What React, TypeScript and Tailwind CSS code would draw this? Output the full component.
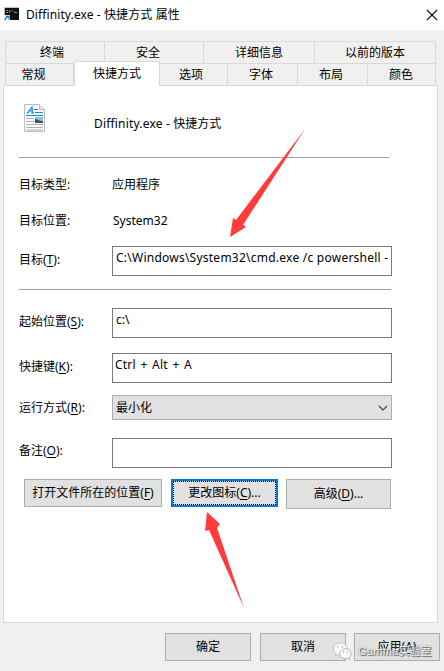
import type { ReactNode } from "react";

function Key({ children }: { children: ReactNode }) {
  return <span className="underline decoration-1 underline-offset-2">{children}</span>;
}

function Tab({ label, className }: { label: string; className: string }) {
  return (
    <div className={`box-border flex h-[22px] shrink-0 items-center justify-center border-r border-t border-[#d9d9d9] ${className}`}>
      {label}
    </div>
  );
}

function Row({ label, className, labelClass = "", children }: { label: ReactNode; className: string; labelClass?: string; children?: ReactNode }) {
  return (
    <div className={`flex ${className}`}>
      <div className={`flex w-[93px] shrink-0 items-center ${labelClass}`}>
        <span>{label}</span>
      </div>
      {children}
    </div>
  );
}

function Field({ children }: { children?: ReactNode }) {
  return (
    <div className="h-[30px] w-[280px] overflow-hidden border border-[#7a7a7a] bg-white pl-[3px] pt-[2px] leading-[18px]">
      {children}
    </div>
  );
}

function Button({ children, className }: { children: ReactNode; className: string }) {
  return (
    <div className={`flex shrink-0 items-center justify-center border border-[#adadad] bg-[#e1e1e1] ${className}`}>
      <span>{children}</span>
    </div>
  );
}

function ConsoleIcon() {
  return (
    <svg width="16" height="16" viewBox="0 0 16 16" className="shrink-0">
      <rect x="0" y="0" width="15" height="13" fill="#b8b8b8" />
      <rect x="1" y="1" width="14" height="12" fill="#101010" />
      <path d="M0 .5H15" stroke="#c4c4c4" />
      <path d="M2 3.500h2M2 5.500h2M5.500 3v3M7 4.500l1-1 1 1M10 5.500h3" stroke="#a8a8a8" strokeWidth="0.800" fill="none" />
      <rect x="0" y="8" width="6" height="6" fill="#eef5fb" />
      <path d="M1 13C1 11 2 10.500 4 9.500M2 9.500h3v3" fill="none" stroke="#1f73b7" strokeWidth="1.300" />
    </svg>
  );
}

function DocumentIcon() {
  return (
    <svg width="22" height="29" viewBox="0 0 22 29" className="shrink-0">
      <path d="M.5 .5H15.500L20.500 5.500V27.500H.5Z" fill="#fbfbfb" stroke="#bdbdbd" />
      <path d="M15.500 .5V5.500H20.500" fill="#e8e8e8" stroke="#bdbdbd" />
      <path d="M2.500 9H5M3.500 9L8 3L8.500 9M5.500 6.800H8M7 9H10" fill="none" stroke="#168bd2" strokeWidth="1.200" />
      <path d="M10 5.500h4M11 8.500h8M2 11.500h17" stroke="#168bd2" />
      <path d="M2 14.500h8M2 17.500h8M2 20.500h17M2 23.500h17M2 26h17" stroke="#b0b0b0" />
      <rect x="11" y="13" width="8" height="6" fill="#8cbfe6" />
      <path d="M11 15c3 0 3 2 8 2v2h-8Z" fill="#35546b" />
    </svg>
  );
}

function Watermark() {
  return (
    <div className="absolute left-[333px] top-[642px] flex items-start">
      <svg width="19" height="19" viewBox="0 0 19 19">
        <path d="M7.500 1C3.500 1 .7 3.500 .7 6.700c0 2 1 3.600 2.600 4.700L2.500 14l3-1.500c4 .8 8.700-1.500 8.700-5.800C14.200 3.500 11.500 1 7.500 1Z" fill="#fafafa" stroke="#b4b4b4" strokeWidth=".7" />
        <path d="M12.500 6.700c-3.500 0-5.700 2-5.700 4.900 0 3 2.500 5 5.700 5l2-.3 2.400 1.300-.7-2.200c1.300-1 2-2.200 2-3.800 0-2.900-2.500-4.900-5.700-4.900Z" fill="#fafafa" stroke="#9f9f9f" strokeWidth=".7" />
        <path d="M4.500 4.500h1v1h-1ZM9 4.500h1v1H9ZM10 9.500h1v1h-1ZM14 9.500h1v1h-1Z" fill="#777" />
      </svg>
      <span className="ml-[6px] whitespace-nowrap font-['Liberation_Sans','Noto_Sans_CJK_SC',sans-serif] text-[11px] leading-[18px] text-[#f5f5f5] [text-shadow:1px_1px_1px_#555,0_0_1px_#666]">
        <span className="tracking-[0.300px]">Gamma</span>实验室
      </span>
    </div>
  );
}

export default function App() {
  return (
    <div className="relative flex h-[671px] w-[444px] flex-col overflow-hidden whitespace-nowrap bg-[#f0f0f0] font-['Noto_Sans','Noto_Sans_CJK_SC',sans-serif] text-[12px] leading-[18px] text-black">
      <header className="flex h-[30px] shrink-0 items-center bg-white pl-1">
        <ConsoleIcon />
        <span className="ml-[6px] tracking-[0.100px]">Diffinity.exe - 快捷方式 属性</span>
        <svg width="12" height="12" viewBox="0 0 12 12" className="mb-px ml-auto mr-[6px]">
          <path d="M1 1L11 11M11 1L1 11" stroke="#111" strokeWidth="1.100" />
        </svg>
      </header>

      <nav className="mt-[11px] flex flex-col pl-[5px]">
        <div className="flex">
          <Tab label="终端" className="w-[100px] border-l pr-[6px]" />
          <Tab label="安全" className="w-[99px] pr-[12px]" />
          <Tab label="详细信息" className="w-[111px]" />
          <Tab label="以前的版本" className="w-[121px]" />
        </div>
        <div className="flex">
          <Tab label="常规" className="w-[69px] border-l pr-[12px]" />
          <div className="relative z-10 -mb-px -mt-[2px] flex h-[25px] w-[86px] shrink-0 items-center justify-center border-x border-t border-[#d9d9d9] bg-white">
            快捷方式
          </div>
          <Tab label="选项" className="w-[68px] pr-[5px]" />
          <Tab label="字体" className="w-[70px] pr-[3px]" />
          <Tab label="布局" className="w-[70px] pr-[3px]" />
          <Tab label="颜色" className="w-[68px] pr-px" />
        </div>
      </nav>

      <main className="ml-[3px] h-[538px] w-[435px] shrink-0 border border-[#d9d9d9] bg-white pl-[15px]">
        <div className="flex h-[71px] pl-[5px] pt-[18px]">
          <DocumentIcon />
          <span className="ml-[48px] mt-[11px]"><span className="tracking-[0.180px]">Diffinity.exe - </span>快捷方式</span>
        </div>
        <hr className="w-[370px] border-[#a0a0a0]" />
        <Row label="目标类型:" className="mt-[17px] h-[20px] items-center">应用程序</Row>
        <Row label="目标位置:" className="mt-[16px] h-[20px] items-center"><span className="ml-px">System32</span></Row>
        <Row label={<>目标(<Key>T</Key>):</>} labelClass="pb-[2px]" className="mt-[15px] h-[30px]">
          <Field><span className="tracking-[0.240px]">C:\Windows\System32\cmd.exe /c powershell -</span></Field>
        </Row>
        <hr className="mt-[13px] w-[372px] border-[#a0a0a0]" />
        <Row label={<>起始位置(<Key>S</Key>):</>} labelClass="pb-[3px]" className="mt-[18px] h-[30px]"><Field>c:\</Field></Row>
        <Row label={<>快捷键(<Key>K</Key>):</>} labelClass="pb-[3px]" className="mt-[15px] h-[30px]">
          <Field><span className="-ml-px tracking-[0.200px] [word-spacing:1.300px]">Ctrl + Alt + A</span></Field>
        </Row>
        <Row label={<>运行方式(<Key>R</Key>):</>} className="mt-[12px] h-[25px]">
          <div className="flex w-[280px] items-center justify-between border border-[#adadad] bg-[#e1e1e1] pl-[3px] pr-[3px]">
            <span>最小化</span>
            <svg width="10" height="6" viewBox="0 0 10 6"><path d="M1 1L5 5L9 1" fill="none" stroke="#444" strokeWidth="1.200" /></svg>
          </div>
        </Row>
        <Row label={<>备注(<Key>O</Key>):</>} labelClass="pb-[4px]" className="mt-[18px] h-[30px]"><Field /></Row>
        <div className="mt-[11px] flex items-start pl-[5px]">
          <Button className="h-[28px] w-[138px]">打开文件所在的位置(<Key>F</Key>)</Button>
          <div className="ml-[9px] h-[28px] w-[107px] border-2 border-[#0078d7] bg-[#e1e1e1]">
            <div className="flex h-full items-center justify-center border border-dotted border-black">
              <span>更改图标(<Key>C</Key>)...</span>
            </div>
          </div>
          <Button className="ml-[8px] h-[30px] w-[105px]">高级(<Key>D</Key>)...</Button>
        </div>
      </main>

      <footer className="mt-[10px] flex pl-[165px]">
        <Button className="h-[28px] w-[86px]">确定</Button>
        <Button className="ml-[9px] h-[28px] w-[86px]">取消</Button>
        <Button className="ml-[8px] h-[28px] w-[86px]">应用(<Key>A</Key>)</Button>
      </footer>

      <svg className="absolute left-0 top-0" width="444" height="671" viewBox="0 0 444 671">
        <path d="M305 129L243 225L246 227L230 237L233 218L236 220Z" fill="#ff3b3b" />
        <path d="M207 512L220 524L217 528L244 608L209 530L205 531Z" fill="#ff3b3b" />
      </svg>
      <Watermark />
    </div>
  );
}
